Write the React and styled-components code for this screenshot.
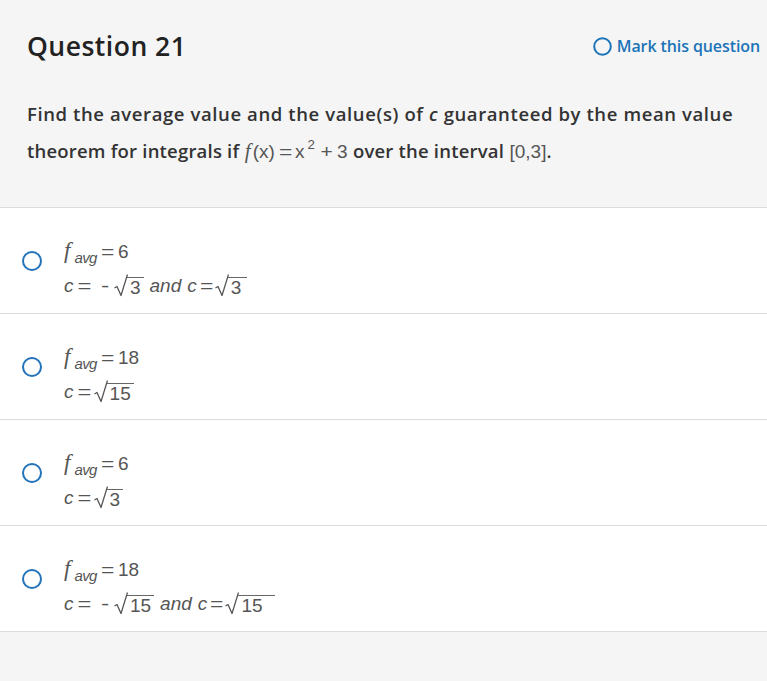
import React from "react";
import styled, { createGlobalStyle } from "styled-components";

const Global = createGlobalStyle`
  html, body { margin: 0; padding: 0; background: #f5f5f5; }
  body { font-family: "Open Sans", Lato, sans-serif; color: #333; }
`;

const Page = styled.div`
  width: 767px;
  min-height: 681px;
  background: #f5f5f5;
`;

const Header = styled.header`
  padding: 27px 7px 0 27px;
  height: 180px;
  border-bottom: 1px solid #dcdcdc;
`;

const TitleRow = styled.div`
  display: flex;
  align-items: center;
  justify-content: space-between;
  height: 38px;
`;

const Title = styled.h1`
  margin: 0;
  font-size: 26.5px;
  font-weight: 600;
  letter-spacing: 0.5px;
  color: #222;
`;

const MarkLink = styled.a`
  display: flex;
  align-items: center;
  gap: 5px;
  color: #1c74b8;
  font-size: 16px;
  font-weight: 600;
  letter-spacing: -0.1px;
  text-decoration: none;
`;

const Prompt = styled.p`
  margin: 30px 0 0;
  font-size: 18.5px;
  letter-spacing: 0.6px;
  line-height: 37px;
  font-weight: 600;
  color: #333;
`;

const Tight = styled.span`
  letter-spacing: 0.2px;
`;

const Math = styled.span`
  font-family: "Liberation Sans", Arial, sans-serif;
  font-weight: 400;
  letter-spacing: 0;
  color: #555;
  font-size: 19px;
`;

const Ital = styled.i`
  font-family: "Liberation Serif", "Times New Roman", serif;
  font-style: italic;
  font-size: 21px;
  margin-right: 2px;
`;

const Op = styled.span`
  display: inline-block;
  margin-left: ${(p) => p.$l ?? 3}px;
  margin-right: ${(p) => p.$r ?? p.$l ?? 3}px;
  transform: scaleX(${(p) => p.$sx || 1});
`;

const Sup = styled.sup`
  font-size: 0.7em;
  vertical-align: 0.65em;
  line-height: 0;
  margin-left: 3px;
`;

const Options = styled.ul`
  list-style: none;
  margin: 0;
  padding: 0;
  background: #fff;
`;

const Option = styled.li`
  height: 106px;
  box-sizing: border-box;
  border-bottom: 1px solid #dcdcdc;
  display: flex;
  align-items: center;
  padding-left: 22px;
  gap: 22px;
`;

const Radio = styled.span`
  width: 16px;
  height: 16px;
  border: 2px solid #2273ba;
  border-radius: 50%;
  flex: none;
`;

const Answer = styled.div`
  align-self: flex-start;
  display: flex;
  flex-direction: column;
  gap: 13px;
  padding-top: 32px;
  font-family: "Liberation Sans", Arial, sans-serif;
  font-size: 19px;
  color: #555;
`;

const Line = styled.div`
  display: flex;
  align-items: baseline;
  height: 22px;
  line-height: 22px;
  white-space: nowrap;
`;

const F = styled.span`
  font-family: "Liberation Serif", serif;
  font-style: italic;
  font-size: 23px;
  margin-right: 3px;
`;

const Sub = styled.span`
  font-style: italic;
  font-size: 15px;
  position: relative;
  top: 5px;
  margin-left: 1px;
  letter-spacing: -0.6px;
`;

const C = styled.span`
  font-style: italic;
`;

const And = styled.span`
  font-style: italic;
  margin: 0 6px 0 6px;
`;

const Root = styled.span`
  display: inline-flex;
  align-items: flex-end;
  align-self: flex-end;
`;

const Radicand = styled.span`
  border-top: 1px solid #666;
  padding: 0 ${(p) => p.$pad}px 0 3px;
  line-height: 20px;
  margin-left: -1px;
  margin-bottom: -1px;
`;

const RadicalSign = () => (
  <svg width="14" height="23" viewBox="0 0 14 23" style={{ flex: "none" }}>
    <path d="M0.5 14 L3 12.5 L7 21.5 L13.5 0.5" fill="none" stroke="#555" strokeWidth="1.3" strokeLinejoin="round" />
  </svg>
);

const Sqrt = ({ children, pad = 3 }) => (
  <Root>
    <RadicalSign />
    <Radicand $pad={pad}>{children}</Radicand>
  </Root>
);

const MarkIcon = () => (
  <svg width="19" height="19" viewBox="0 0 19 19">
    <circle cx="9.5" cy="9.5" r="8.3" fill="none" stroke="#1c74b8" strokeWidth="2" />
  </svg>
);

const answers = [
  { favg: "6", neg: true, r: "3" },
  { favg: "18", neg: false, r: "15" },
  { favg: "6", neg: false, r: "3" },
  { favg: "18", neg: true, r: "15" },
];

export default function App() {
  return (
    <Page>
      <Global />
      <Header>
        <TitleRow>
          <Title>Question 21</Title>
          <MarkLink href="#">
            <MarkIcon />
            Mark this question
          </MarkLink>
        </TitleRow>
        <Prompt>
          Find the average value and the value(s) of <i>c</i> guaranteed by the mean value
          <br />
          <Tight>theorem for integrals if</Tight>{" "}
          <Math>
            <Ital>f</Ital>(x)<Op $l={5} $r={4} $sx={1.2}>=</Op>x<Sup>2</Sup>
            <Op $l={6} $r={5} $sx={1.1}>+</Op>3
          </Math>{" "}
          <Tight>over the interval</Tight> <Math>[0,3]</Math>.
        </Prompt>
      </Header>
      <Options>
        {answers.map((a, i) => (
          <Option key={i}>
            <Radio />
            <Answer>
              <Line>
                <F>f</F>
                <Sub>avg</Sub>
                <Op $l={5} $r={5} $sx={1.2}>=</Op>
                {a.favg}
              </Line>
              <Line>
                <C>c</C>
                <Op $l={5} $r={4} $sx={1.25}>=</Op>
                {a.neg ? (
                  <>
                    <Op $l={8} $r={6} $sx={1.3}>-</Op>
                    <Sqrt>{a.r}</Sqrt>
                    <And>and</And>
                    <C>c</C>
                    <Op $l={4} $r={3} $sx={1.2}>=</Op>
                    <Sqrt pad={a.r === "15" ? 12 : 6}>{a.r}</Sqrt>
                  </>
                ) : (
                  <Sqrt>{a.r}</Sqrt>
                )}
              </Line>
            </Answer>
          </Option>
        ))}
      </Options>
    </Page>
  );
}
